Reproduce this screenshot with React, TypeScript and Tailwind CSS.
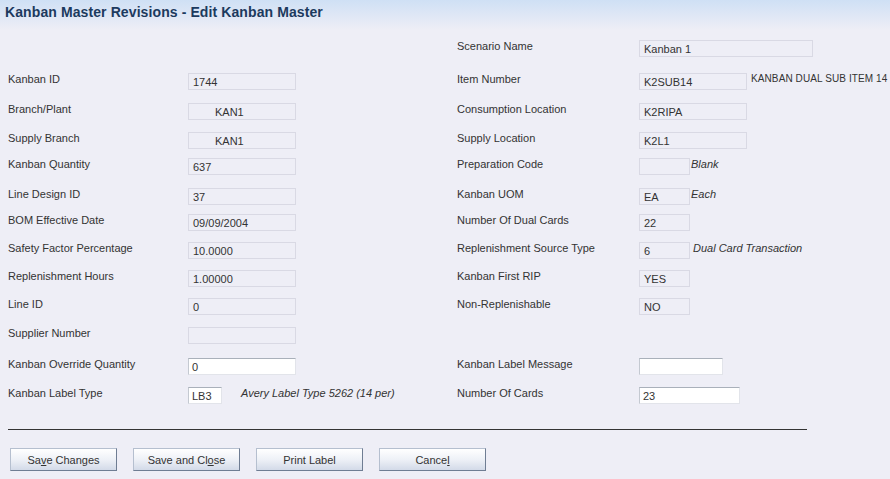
import React from 'react';

/* Kanban Master Revisions - read-only form with a few editable fields */

type Field = {
  label: string;
  value?: string;
  width: number;
  editable?: boolean;
  indent?: boolean;
  note?: string;
  noteItalic?: boolean;
  noteGap?: number;
};

type Row = { h: number; left?: Field; right?: Field };

const rows: Row[] = [
  { h: 33, right: { label: 'Scenario Name', value: 'Kanban 1', width: 174 } },
  {
    h: 30,
    left: { label: 'Kanban ID', value: '1744', width: 108 },
    right: { label: 'Item Number', value: 'K2SUB14', width: 108, note: 'KANBAN DUAL SUB ITEM 14', noteGap: 4 },
  },
  {
    h: 29,
    left: { label: 'Branch/Plant', value: 'KAN1', width: 108, indent: true },
    right: { label: 'Consumption Location', value: 'K2RIPA', width: 108 },
  },
  {
    h: 26,
    left: { label: 'Supply Branch', value: 'KAN1', width: 108, indent: true },
    right: { label: 'Supply Location', value: 'K2L1', width: 108 },
  },
  {
    h: 30,
    left: { label: 'Kanban Quantity', value: '637', width: 108 },
    right: { label: 'Preparation Code', value: '', width: 51, note: 'Blank', noteItalic: true, noteGap: 1 },
  },
  {
    h: 26,
    left: { label: 'Line Design ID', value: '37', width: 108 },
    right: { label: 'Kanban UOM', value: 'EA', width: 51, note: 'Each', noteItalic: true, noteGap: 1 },
  },
  {
    h: 28,
    left: { label: 'BOM Effective Date', value: '09/09/2004', width: 108 },
    right: { label: 'Number Of Dual Cards', value: '22', width: 51 },
  },
  {
    h: 28,
    left: { label: 'Safety Factor Percentage', value: '10.0000', width: 108 },
    right: { label: 'Replenishment Source Type', value: '6', width: 51, note: 'Dual Card Transaction', noteItalic: true, noteGap: 3 },
  },
  {
    h: 28,
    left: { label: 'Replenishment Hours', value: '1.00000', width: 108 },
    right: { label: 'Kanban First RIP', value: 'YES', width: 51 },
  },
  {
    h: 29,
    left: { label: 'Line ID', value: '0', width: 108 },
    right: { label: 'Non-Replenishable', value: 'NO', width: 51 },
  },
  { h: 31, left: { label: 'Supplier Number', value: '', width: 108 } },
  {
    h: 29,
    left: { label: 'Kanban Override Quantity', value: '0', width: 108, editable: true },
    right: { label: 'Kanban Label Message', value: '', width: 84, editable: true },
  },
  {
    h: 17,
    left: { label: 'Kanban Label Type', value: 'LB3', width: 34, editable: true, note: 'Avery Label Type 5262 (14 per)', noteItalic: true, noteGap: 19 },
    right: { label: 'Number Of Cards', value: '23', width: 101, editable: true },
  },
];

function FieldCell({ field, labelWidth }: { field: Field; labelWidth: number }) {
  return (
    <div className="flex items-start">
      <div className="shrink-0 -mt-[1px] leading-[14px] text-[#333]" style={{ width: labelWidth }}>
        {field.label}
      </div>
      <div
        className={`shrink-0 h-[17px] leading-[15px] pt-[1px] text-[#333] whitespace-nowrap ${
          field.editable
            ? 'bg-white border border-[#e2e4ea] border-t-[#a9b0ba] border-l-[#c4c9d1] pl-[3px]'
            : 'border border-[#d9d9e4] pl-[4px]'
        } ${field.indent ? 'pl-[26px]' : ''}`}
        style={{ width: field.width }}
      >
        {field.value}
      </div>
      {field.note && (
        <div
          className={`shrink-0 -mt-[1px] leading-[14px] text-[#333] whitespace-nowrap ${
            field.noteItalic ? 'italic' : 'text-[10px] tracking-[0.1px]'
          }`}
          style={{ marginLeft: field.noteGap }}
        >
          {field.note}
        </div>
      )}
    </div>
  );
}

function ActionButton({ children }: { children: React.ReactNode }) {
  return (
    <button className="w-[107px] h-[23px] border border-[#b5bfcf] border-r-[#6f7d93] border-b-[#6f7d93] bg-gradient-to-b from-[#ffffff] via-[#eef1f7] to-[#d3dae8] text-[11px] text-[#333] leading-[20px]">
      {children}
    </button>
  );
}

export default function App() {
  return (
    <div
      className="w-[890px] h-[479px] bg-[#eeeef6] text-[11px] overflow-hidden"
      style={{ fontFamily: '"Liberation Sans", Arial, sans-serif' }}
    >
      {/* Header */}
      <div className="h-[30px] bg-gradient-to-b from-[#cfe0f5] to-[#eeeef6] px-[5px] pt-[3px]">
        <h1 className="text-[14px] font-bold text-[#1c3a5e] leading-[18px] tracking-[0.1px]">
          Kanban Master Revisions - Edit Kanban Master
        </h1>
      </div>

      {/* Form rows */}
      <div className="mt-[10px]">
        {rows.map((row, i) => (
          <div key={i} className="flex" style={{ height: row.h }}>
            <div className="w-[449px] shrink-0 pl-[8px]">
              {row.left && <FieldCell field={row.left} labelWidth={180} />}
            </div>
            <div className="pl-[8px]">
              {row.right && <FieldCell field={row.right} labelWidth={182} />}
            </div>
          </div>
        ))}
      </div>

      {/* Separator */}
      <div className="ml-[8px] w-[799px] h-px bg-[#333] mt-[25px]" />

      {/* Buttons */}
      <div className="flex gap-[16px] pl-[10px] mt-[18px]">
        <ActionButton>
          Sa<span className="underline">v</span>e Changes
        </ActionButton>
        <ActionButton>
          Save and Cl<span className="underline">o</span>se
        </ActionButton>
        <ActionButton>Print Label</ActionButton>
        <ActionButton>
          Cance<span className="underline">l</span>
        </ActionButton>
      </div>
    </div>
  );
}
